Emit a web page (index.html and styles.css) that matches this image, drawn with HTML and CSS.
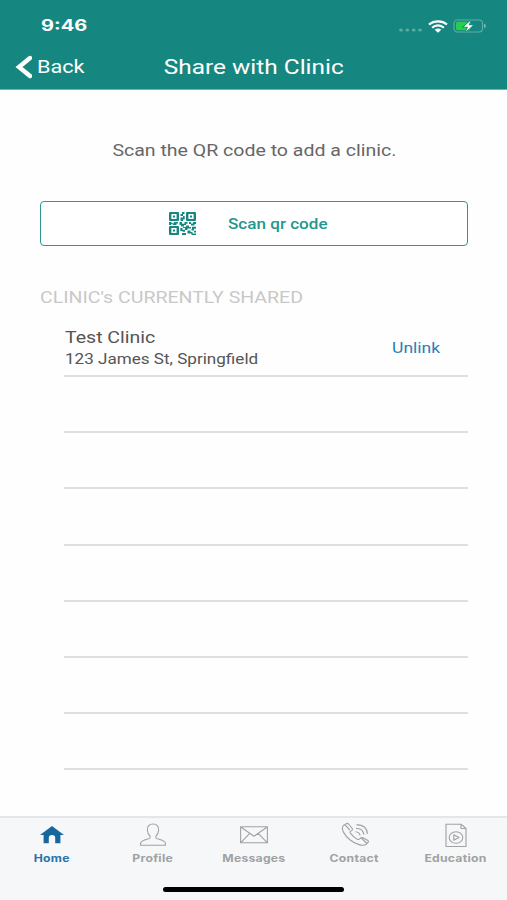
FILE: index.html
```html
<!DOCTYPE html>
<html lang="en">
<head>
    <meta charset="UTF-8">
    <meta name="viewport" content="width=device-width, initial-scale=1.0">
    <title>Share with Clinic</title>
    <link rel="stylesheet" href="styles.css">
</head>
<body>
    <header>
        <div class="status-bar">
            <span class="time wide">9:46</span>
            <div class="status-icons">
                <svg class="signal" width="24" height="4" viewBox="0 0 24 4" fill="#5bada5">
                    <ellipse cx="2" cy="2" rx="1.9" ry="1.6"/><ellipse cx="8.3" cy="2" rx="1.9" ry="1.6"/><ellipse cx="14.7" cy="2" rx="1.9" ry="1.6"/><ellipse cx="21" cy="2" rx="1.9" ry="1.6"/>
                </svg>
                <svg class="wifi" width="20" height="13" viewBox="0 0 20 13" fill="none" stroke="#fff" stroke-width="2.2">
                    <path d="M1 4.5C6 .2 14 .2 19 4.5M4.1 7.7c3.4-3 8.4-3 11.8 0"/>
                    <path d="M6.7 9.8c2-1.6 4.6-1.6 6.6 0L10 12.8z" fill="#fff" stroke="none"/>
                </svg>
                <svg class="battery" width="34" height="14" viewBox="0 0 34 14">
                    <rect x="1" y="1" width="28.5" height="12" rx="3.5" fill="none" stroke="#62aea8" stroke-width="1.1"/>
                    <path d="M31 4.8c2.4.6 2.4 3.8 0 4.4z" fill="#79bab4"/>
                    <rect x="3" y="2.8" width="14.5" height="8.4" rx="1.5" fill="#25cf4d"/>
                    <path d="M17.5 1.8L10.8 7.8h4.3L13 12.5l7-6.3h-4.4z" fill="#fff" stroke="#168780" stroke-width="1.6" paint-order="stroke"/>
                </svg>
            </div>
        </div>
        <div class="nav-bar">
            <a class="back" href="#">
                <svg width="17" height="24" viewBox="0 0 17 24" fill="none" stroke="#fff" stroke-width="4.4" stroke-linecap="round" stroke-linejoin="miter"><path d="M15 3L4 12l11 9"/></svg>
                <span class="back-text wide">Back</span>
            </a>
            <h1><span class="wide">Share with Clinic</span></h1>
        </div>
    </header>

    <main>
        <p class="intro"><span class="wide">Scan the QR code to add a clinic.</span></p>
        <button class="scan">
            <svg class="qr" width="27" height="23" viewBox="0 0 27 23" preserveAspectRatio="none" fill="#168780">
                <path fill-rule="evenodd" d="M1 0h8a1 1 0 0 1 1 1v7a1 1 0 0 1-1 1H1a1 1 0 0 1-1-1V1a1 1 0 0 1 1-1zm1.4 2v5h5.2V2z"/>
                <path fill-rule="evenodd" d="M18 0h8a1 1 0 0 1 1 1v7a1 1 0 0 1-1 1h-8a1 1 0 0 1-1-1V1a1 1 0 0 1 1-1zm1.4 2v5h5.2V2z"/>
                <path fill-rule="evenodd" d="M1 14h8a1 1 0 0 1 1 1v7a1 1 0 0 1-1 1H1a1 1 0 0 1-1-1v-7a1 1 0 0 1 1-1zm1.4 2v5h5.2v-5z"/>
                <path d="M4 3.5h2v2H4zM21 3.5h2v2h-2zM4 17.5h2v2H4z"/>
                <path d="M13 0h2.5v2H14v2h-2.5V2H13zM11.5 5.5H14V4h1.7v3.5H14V9h-2.5zM0 10h2.5v1.2H5V10h4v1.5H7.5V13H4v-.7H2V13H0zM10.5 10H13v1.7h2.5V10h3v1.7H17V13h-2v1.5h-3V13h-1.5zM20 10h2v1.5h2V10h3v2h-1.5v1.5H22V12h-2zM17 13.5h3V15h2v1.5h-3.5V18H16v-2h-2v-1h3zM11.3 16h2.2v1.8H16v2h-2.5V19h-2.2zM23 14.8h4v2h-2v1.7h-2.5V17H23zM18.5 18.5h3V20h2v1.5H27V23h-4.5v-1.5h-4zM13 21h4v2h-4zM25 18.8h2v1.6h-2z"/>
            </svg>
            <span class="scan-text wide">Scan qr code</span>
        </button>

        <h2><span class="wide">CLINIC's CURRENTLY SHARED</span></h2>
        <ul class="clinics">
            <li>
                <div class="clinic">
                    <span class="clinic-name wide">Test Clinic</span>
                    <span class="clinic-address wide">123 James St, Springfield</span>
                </div>
                <a class="unlink" href="#"><span class="wide">Unlink</span></a>
            </li>
            <li></li>
            <li></li>
            <li></li>
            <li></li>
            <li></li>
            <li></li>
            <li></li>
        </ul>
    </main>

    <footer>
        <nav>
            <a class="tab active" href="#">
                <svg width="28" height="26" viewBox="0 0 28 26"><path d="M14 4L26 13h-3.6v8.2h-5.2v-5.4a3.2 2.8 0 0 0-6.4 0v5.4H5.6V13H2z"/></svg>
                <span class="wide">Home</span>
            </a>
            <a class="tab" href="#">
                <svg width="28" height="26" viewBox="0 0 28 26"><path d="M14 2c-3.7 0-6 2.3-5.6 6.2.1 2.6 1 4.3 2.6 5.8v2c-1 1.4-7.8 1.5-9.3 4.8l-.2 2.4h25l-.2-2.4c-1.5-3.3-8.3-3.4-9.3-4.8v-2c1.6-1.5 2.5-3.2 2.6-5.8C20 4.3 17.7 2 14 2z"/></svg>
                <span class="wide">Profile</span>
            </a>
            <a class="tab" href="#">
                <svg width="28" height="26" viewBox="0 0 28 26"><path d="M.6 4.8h26.8v16H.6zM.8 5l13.2 9.2L27.2 5M.8 20.6l9-9.2M27.2 20.6l-9-9.2"/></svg>
                <span class="wide">Messages</span>
            </a>
            <a class="tab" href="#">
                <svg width="28" height="26" viewBox="0 0 28 26"><path d="M5.2 1.8L2.4 3.5C-.5 7 3.5 13.5 9.2 18s12.6 6.5 16.2 4.2l1.8-2c.5-.7.2-1.4-.7-2l-4.6-2.5c-.9-.4-1.7-.3-2.3.3l-1.2 1.2c-.6.5-1.5.4-2.4-.1-2.8-1.7-5-3.8-6.5-5.7-.6-.8-.6-1.5 0-2l1.4-1c.6-.5.8-1.1.3-1.9L7.7 2.2c-.6-.9-1.7-.9-2.5-.4zM3.8 2.7l5 5.3M20.4 16l5.5 5.5M14.5 9.7c2.7.2 4.2 1.3 4.6 3.7M15 6.2c4.8.1 7.4 2.3 7.9 6.4M15.5 2.6c6.6.2 10.5 3.5 11 9.3"/></svg>
                <span class="wide">Contact</span>
            </a>
            <a class="tab" href="#">
                <svg width="28" height="26" viewBox="0 0 28 26"><path d="M4 2.2h15l5 4.3v18H4zM19 2.2v4.3h5"/><ellipse cx="14" cy="15.5" rx="6.8" ry="5.8"/><path d="M11.8 12.8v5.4l5.2-2.7z"/></svg>
                <span class="wide">Education</span>
            </a>
        </nav>
        <div class="home-indicator"></div>
    </footer>
</body>
</html>
```
FILE: styles.css
```css
* {
    box-sizing: border-box;
}
body {
    font-family: Roboto, "Liberation Sans", sans-serif;
    background-color: #fefefe;
    color: #555;
    margin: 0;
    height: 900px;
    display: flex;
    flex-direction: column;
    overflow: hidden;
}
a {
    text-decoration: none;
}
/* the type is set wider than its normal proportions */
.wide {
    display: inline-block;
    white-space: nowrap;
    transform: scaleX(1.22);
    transform-origin: left center;
}
header {
    background-color: #168780;
    color: #fff;
    height: 90px;
    border-bottom: 1px solid #73b5b0;
}
.status-bar {
    height: 46px;
    padding: 6px 20px 0 41px;
    display: flex;
    justify-content: space-between;
    align-items: center;
}
.time {
    font: 700 15.5px/20px Inter, sans-serif;
    transform: scaleX(1.29);
}
.status-icons {
    display: flex;
    align-items: center;
}
.signal {
    margin: 8px 5px 0 0;
}
.wifi {
    margin-right: 5px;
}
.nav-bar {
    height: 42px;
    display: grid;
    grid-template-columns: 120px 1fr 120px;
    align-items: center;
}
.back {
    display: flex;
    align-items: center;
    color: #fff;
    padding-left: 15px;
    gap: 5px;
}
.back-text {
    font-size: 19px;
    line-height: 24px;
    transform: scaleX(1.14);
}
h1 {
    margin: 0;
    font-size: 20px;
    font-weight: 400;
    line-height: 24px;
    text-align: center;
}
h1 .wide, .intro .wide, .tab .wide {
    transform-origin: center;
}
main {
    flex: 1;
    padding: 50px 39px 0 40px;
}
.intro {
    margin: 0;
    font-size: 16px;
    line-height: 22px;
    text-align: center;
    color: #666;
}
.scan {
    display: flex;
    align-items: center;
    width: 100%;
    height: 45px;
    margin: 39px 0 0;
    padding: 0 0 0 128px;
    background-color: #fff;
    border: 1px solid #2f978f;
    border-radius: 4px;
    color: #22978e;
    font-family: inherit;
}
.scan-text {
    margin: 1px 0 0 32px;
    font-size: 14px;
    font-weight: 500;
}
h2 {
    margin: 41px 0 0;
    font-size: 16px;
    font-weight: 400;
    line-height: 22px;
    color: #c8c8c8;
}
.clinics {
    list-style: none;
    margin: 12px 0 0 24px;
    padding: 0;
}
.clinics li {
    height: 56.15px;
    border-bottom: 2px solid #dedfe0;
    display: flex;
    justify-content: space-between;
    align-items: center;
}
.clinic {
    display: flex;
    flex-direction: column;
    align-items: flex-start;
    padding-left: 1px;
}
.clinic-name {
    font-size: 16px;
    line-height: 21px;
}
.clinic-address {
    padding-top: 1px;
    font-size: 14px;
    line-height: 21px;
}
.unlink {
    width: 76px;
    padding-top: 1px;
    color: #2a80b8;
    font-size: 14.4px;
}
footer {
    height: 84px;
    background-color: #f5f7f8;
    border-top: 2px solid #e5e6e7;
}
nav {
    display: flex;
    padding: 4px 1px 0 1px;
}
.tab {
    flex: 1;
    display: flex;
    flex-direction: column;
    align-items: center;
    color: #a0a2a4;
    font: 700 10px/14px Inter, sans-serif;
    letter-spacing: 0.2px;
    gap: 3px;
}
.tab svg {
    fill: none;
    stroke: #a0a2a4;
    stroke-width: 1.1;
    stroke-linejoin: round;
}
.active {
    color: #2473ab;
}
.active svg {
    fill: #17679f;
    stroke: none;
}
.home-indicator {
    width: 181px;
    height: 5px;
    margin: 22px auto 0;
    border-radius: 3px;
    background-color: #000;
}
```
